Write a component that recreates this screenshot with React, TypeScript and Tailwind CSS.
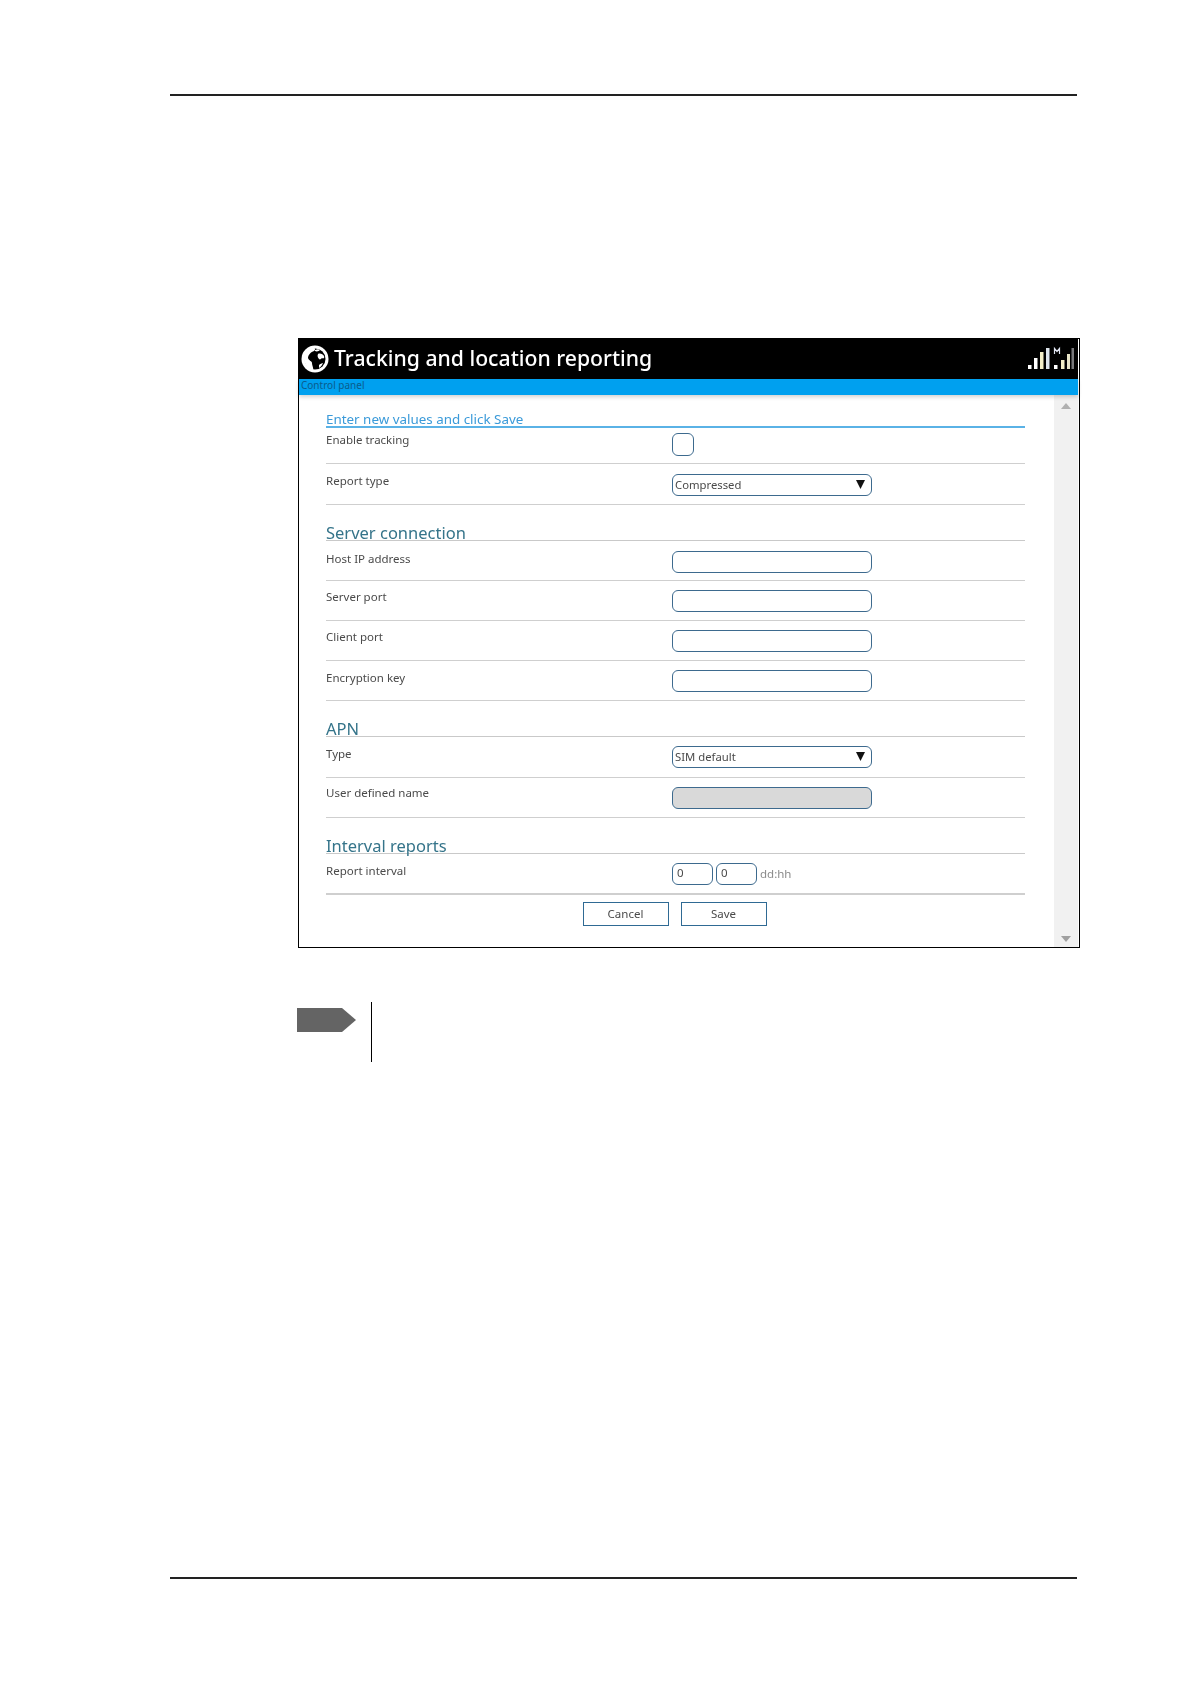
import type React from "react"

const Row = ({ label, height, labelTop = "pt-[8px]", children, thick }: { label: string; height: string; labelTop?: string; children?: React.ReactNode; thick?: boolean }) => (
    <div className={`flex border-b-[#cfcfcf] ${height} ${thick ? "border-b-2" : "border-b"}`}>
        <div className={`w-[346px] shrink-0 text-[11.5px] leading-[16px] text-[#4a4a4a] ${labelTop}`}>{label}</div>
        {children}
    </div>
)

const TextField = ({ disabled, top = "mt-[9px]" }: { disabled?: boolean; top?: string }) => (
    <div className={`h-[22px] w-[200px] rounded-[6px] border border-[#3d6a8e] ${top} ${disabled ? "bg-[#d9d9d9]" : "bg-white"}`} />
)

const SelectField = ({ value }: { value: string }) => (
    <div className="mt-[9px] flex h-[22px] w-[200px] items-center justify-between rounded-[6px] border border-[#3d6a8e] pl-[2px] pr-[6px] text-[11.3px] text-[#4a4a4a]">
        <span>{value}</span>
        <svg width="9" height="9" viewBox="0 0 9 9" className="mb-[2px]">
            <path d="M0 0H9L4.5 9Z" fill="#111" />
        </svg>
    </div>
)

const SectionTitle = ({ children }: { children: React.ReactNode }) => (
    <div className="mt-[13px] flex h-[23px] items-end border-b border-b-[#c9c9c9] text-[16.5px] leading-[22px] text-[#35748a]">
        <span className="translate-y-[4px]">{children}</span>
    </div>
)

const Globe = () => (
    <svg width="28" height="28" viewBox="0 0 28 28">
        <circle cx="14" cy="14" r="13.5" fill="#fff" />
        <circle cx="14" cy="14" r="10.5" fill="#000" />
        <path d="M11 1C5 3 2 9 3 15c1 5 4 9 9 11 1-3-1-5-1-8 0-2-3-2-4-5 0-3 3-6 6-7 2-1 1-4-2-5Z" fill="#fff" />
        <path d="M17 9c2-1 5 0 6 2 1 2-1 3-2 2-1 1-2 2-3 1-1-1-2-3-1-5Z" fill="#fff" />
        <path d="M14 5c2-1 4-1 5 0-1 1-3 2-5 1Z" fill="#fff" />
        <path d="M18 20c1-1 3-2 4-2-1 2-2 4-4 5Z" fill="#fff" />
    </svg>
)

const Signal = () => (
    <svg width="46" height="26" viewBox="0 0 46 26">
        <rect x="0" y="19" width="3.5" height="4" fill="#fff" />
        <rect x="6" y="12" width="3.5" height="11" fill="#fff" />
        <rect x="12" y="6" width="3.5" height="17" fill="#f4efc8" />
        <rect x="18" y="2" width="3.5" height="21" fill="#dfe6ee" />
        <path d="M26.5 8V2.5L29 5.5L31.5 2.5V8" stroke="#dfe3f0" strokeWidth="1.2" fill="none" />
        <rect x="26" y="19" width="3.5" height="4" fill="#fff" />
        <rect x="33" y="14" width="3.5" height="9" fill="#f4efc8" />
        <rect x="39" y="8" width="3" height="15" fill="#e8e4c8" />
        <rect x="43.5" y="2" width="2.5" height="21" fill="#77777a" />
    </svg>
)

export default function App() {
    return (
        <div className="h-[1684px] w-[1190px] bg-white font-['Noto_Sans','Open_Sans',sans-serif]">
            <div className="flex h-full flex-col px-[170px] pb-[105px] pt-[94px]">
                <div className="h-[2px] w-[907px] shrink-0 bg-[#222]" />

                <div className="ml-[128px] mt-[242px] h-[610px] w-[782px] shrink-0 border-[1.5px] border-black bg-white pr-[1px]">
                    <div className="flex h-[40px] items-center justify-between bg-black pl-[2px] pr-[4px]">
                        <div className="flex items-center gap-[5px]">
                            <Globe />
                            <span className="translate-y-[-1px] text-[21.2px] font-medium leading-[28px] text-white blur-[0.3px]">Tracking and location reporting</span>
                        </div>
                        <Signal />
                    </div>
                    <div className="relative z-10 h-[16px] bg-[#00a0ef] pl-[2px] text-[10px] leading-[12px] text-[#0a5c8c] shadow-[0_2px_4px_rgba(0,0,0,0.18)]">
                        Control panel
                    </div>

                    <div className="flex h-[552px]">
                        <div className="flex-1 pl-[27px] pr-[29px] pt-[16px] blur-[0.3px]">
                            <div className="h-[17px] border-b-2 border-b-[#5ab2e6] text-[13.4px] leading-[20px] text-[#3a9ad9]">
                                <span className="block translate-y-[-2px]">Enter new values and click Save</span>
                            </div>
                            <Row label="Enable tracking" height="h-[36px]" labelTop="pt-[4px]">
                                <div className="mt-[5px] h-[23px] w-[22px] rounded-[6px] border border-[#3d6a8e]" />
                            </Row>
                            <Row label="Report type" height="h-[41px]" labelTop="pt-[9px]">
                                <div className="pt-[1px]">
                                    <SelectField value="Compressed" />
                                </div>
                            </Row>

                            <SectionTitle>Server connection</SectionTitle>
                            <Row label="Host IP address" height="h-[40px]" labelTop="pt-[10px]">
                                <TextField top="mt-[10px]" />
                            </Row>
                            <Row label="Server port" height="h-[40px]">
                                <TextField />
                            </Row>
                            <Row label="Client port" height="h-[40px]">
                                <TextField />
                            </Row>
                            <Row label="Encryption key" height="h-[40px]" labelTop="pt-[9px]">
                                <TextField />
                            </Row>

                            <SectionTitle>APN</SectionTitle>
                            <Row label="Type" height="h-[41px]" labelTop="pt-[9px]">
                                <SelectField value="SIM default" />
                            </Row>
                            <Row label="User defined name" height="h-[40px]" labelTop="pt-[7px]">
                                <TextField disabled />
                            </Row>

                            <SectionTitle>Interval reports</SectionTitle>
                            <Row label="Report interval" height="h-[41px]" labelTop="pt-[9px]" thick>
                                <div className="mt-[9px] flex h-[22px] items-center gap-[3px] text-[11.5px] text-[#4a4a4a]">
                                    <div className="h-[22px] w-[41px] rounded-[6px] border border-[#3d6a8e] pl-[4px] leading-[18px]">0</div>
                                    <div className="h-[22px] w-[41px] rounded-[6px] border border-[#3d6a8e] pl-[4px] leading-[18px]">0</div>
                                    <span className="text-[#8a8a8a]">dd:hh</span>
                                </div>
                            </Row>

                            <div className="mt-[7px] flex justify-center gap-[12px] pr-[2px]">
                                <div className="flex h-[24px] w-[86px] items-center justify-center border border-[#2f6a94] text-[11.5px] text-[#4a4a4a]">Cancel</div>
                                <div className="flex h-[24px] w-[86px] items-center justify-center border border-[#2f6a94] text-[11.5px] text-[#4a4a4a]">Save</div>
                            </div>
                        </div>

                        <div className="flex w-[24px] shrink-0 flex-col items-center justify-between bg-[#f1f1f1] pb-[5px] pt-[8px]">
                            <svg width="10" height="6" viewBox="0 0 10 6"><path d="M5 0L10 6H0Z" fill="#b0b0b0" /></svg>
                            <svg width="10" height="6" viewBox="0 0 10 6"><path d="M0 0H10L5 6Z" fill="#a0a0a0" /></svg>
                        </div>
                    </div>
                </div>

                <div className="ml-[127px] mt-[54px] flex h-[60px] shrink-0">
                    <svg width="59" height="24" viewBox="0 0 59 24" className="mt-[6px]">
                        <path d="M0 0H45L59 12L45 24H0Z" fill="#646464" />
                    </svg>
                    <div className="ml-[15px] h-[60px] w-px bg-black" />
                </div>

                <div className="mt-auto h-[2px] w-[907px] shrink-0 bg-[#222]" />
            </div>
        </div>
    )
}
